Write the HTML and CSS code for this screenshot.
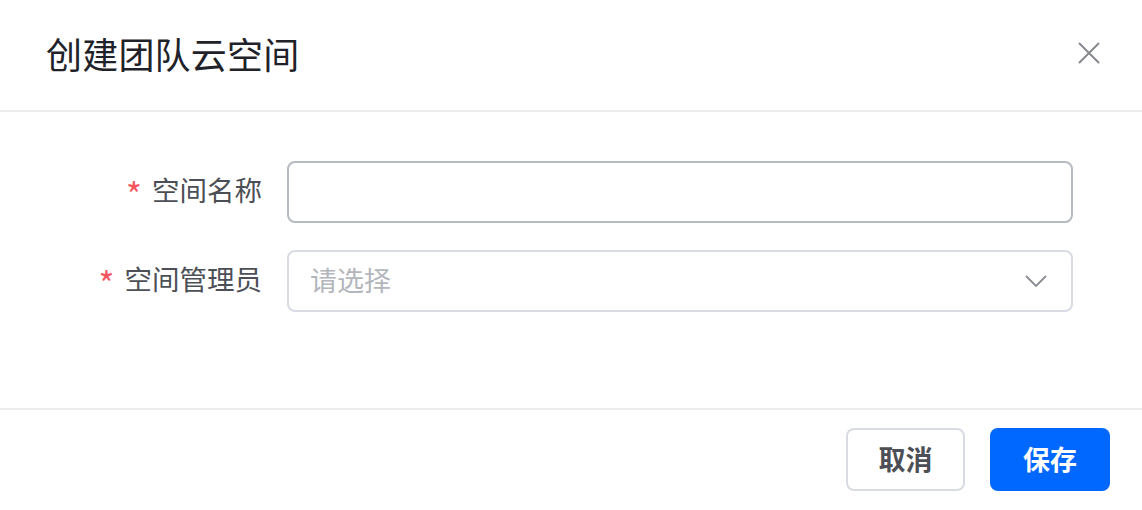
FILE: index.html
```html
<!DOCTYPE html>
<html lang="zh">
<head>
<meta charset="utf-8">
<link rel="stylesheet" href="styles.css">
</head>
<body>
<div class="modal">
  <div class="header">
    <div class="title">创建团队云空间</div>
    <svg class="close" width="22" height="22" viewBox="0 0 22 22"><path d="M1.5 1.5 L20.5 20.5 M20.5 1.5 L1.5 20.5" stroke="#86898f" stroke-width="2" fill="none" stroke-linecap="round"/></svg>
  </div>
  <div class="body">
    <div class="row">
      <label class="label"><span class="req">*</span>空间名称</label>
      <div class="input focus"></div>
    </div>
    <div class="row">
      <label class="label"><span class="req">*</span>空间管理员</label>
      <div class="input select">
        <span class="placeholder">请选择</span>
        <svg class="chev" width="22" height="12" viewBox="0 0 22 12"><path d="M1 1 L11 11 L21 1" stroke="#8a8d93" stroke-width="1.8" fill="none" stroke-linejoin="miter"/></svg>
      </div>
    </div>
  </div>
  <div class="footer">
    <button class="btn cancel">取消</button>
    <button class="btn save">保存</button>
  </div>
</div>
</body>
</html>
```
FILE: styles.css
```css
html, body {
  margin: 0;
  padding: 0;
  background: #fff;
}
body {
  font-family: "Noto Sans CJK SC", "Noto Sans", sans-serif;
}
.modal {
  width: 1142px;
  height: 510px;
  display: flex;
  flex-direction: column;
  background: #fff;
}
.header {
  box-sizing: border-box;
  display: flex;
  align-items: center;
  justify-content: space-between;
  padding: 0 42px 4px 46px;
  border-bottom: 2px solid #ececee;
  flex: none;
  height: 112px;
}
.title {
  font-size: 36px;
  color: #1f2329;
  line-height: 1;
  letter-spacing: 0.2px;
}
.close {
  display: block;
}
.body {
  flex: none;
  height: 296px;
  box-sizing: border-box;
  padding: 49px 69px 0 0;
  display: flex;
  flex-direction: column;
  gap: 27px;
}
.row {
  display: flex;
  align-items: center;
}
.label {
  width: 262px;
  flex: none;
  display: flex;
  justify-content: flex-end;
  align-items: center;
  font-size: 27.5px;
  color: #4c4f55;
  padding: 0 25px 4px 0;
  box-sizing: content-box;
  line-height: 1;
}
.req {
  color: #f5555f;
  font-size: 34px;
  line-height: 1;
  margin: 8px 10px 0 0;
}
.input {
  flex: 1;
  height: 62px;
  box-sizing: border-box;
  border: 2px solid #d8dbe2;
  border-radius: 8px;
  display: flex;
  align-items: center;
  padding: 0 22px 0 21px;
}
.input.focus {
  border-color: #b6bac3;
}
.select {
  justify-content: space-between;
}
.placeholder {
  font-size: 27px;
  color: #b3b6bc;
  line-height: 1;
  padding-bottom: 4px;
}
.chev {
  display: block;
  margin-right: 2px;
}
.footer {
  flex: 1;
  border-top: 2px solid #ececee;
  display: flex;
  justify-content: flex-end;
  align-items: flex-start;
  padding: 18px 32px 0 0;
  gap: 25px;
}
.btn {
  height: 63px;
  border-radius: 8px;
  font-family: "Noto Sans CJK SC", sans-serif;
  font-size: 27px;
  font-weight: 700;
  cursor: pointer;
  padding: 0 0 3px;
  line-height: 1;
}
.cancel {
  width: 119px;
  background: #fff;
  border: 2px solid #d8dbe2;
  color: #4c4f55;
}
.save {
  width: 120px;
  background: #0068ff;
  border: none;
  color: #fff;
}
```
